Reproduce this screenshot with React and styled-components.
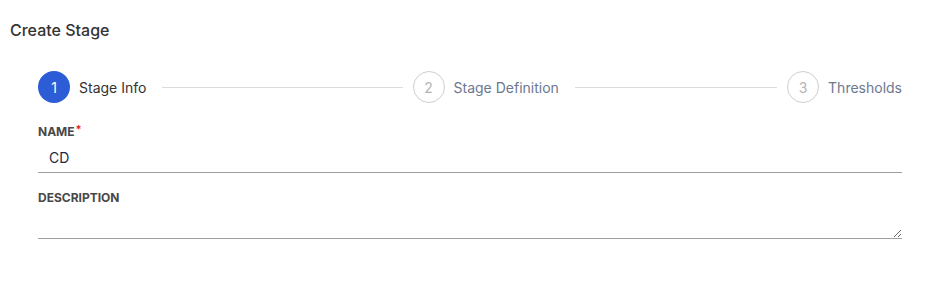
import styled, { createGlobalStyle } from "styled-components";

const GlobalStyle = createGlobalStyle`
  body {
    margin: 0;
    background: #fff;
    font-family: Inter, "Noto Sans", sans-serif;
  }
`;

const Page = styled.div`
  padding: 20px 34px 0 10px;
`;

const Title = styled.h1`
  margin: 0;
  font-size: 16px;
  line-height: 20px;
  font-weight: 500;
  color: #333;
`;

const Body = styled.div`
  padding-left: 28px;
`;

const Stepper = styled.div`
  display: flex;
  align-items: center;
  margin-top: 31px;
  height: 32px;
`;

const Step = styled.div`
  display: flex;
  align-items: center;
  flex: ${(p) => (p.last ? "0 0 auto" : "1 1 0")};
`;

const Circle = styled.span`
  box-sizing: border-box;
  width: 32px;
  height: 32px;
  flex-shrink: 0;
  border-radius: 50%;
  display: flex;
  align-items: center;
  justify-content: center;
  font-size: 14px;
  background: ${(p) => (p.active ? "#2c5cd6" : "#fff")};
  color: ${(p) => (p.active ? "#fff" : "#b4b4b4")};
  border: ${(p) => (p.active ? "none" : "1px solid #cfcfcf")};
`;

const StepLabel = styled.span`
  margin-left: 9px;
  font-size: 14px;
  white-space: nowrap;
  color: ${(p) => (p.active ? "#333" : "#6b7890")};
`;

const Line = styled.div`
  flex: 1;
  height: 1px;
  background: #dcdcdc;
  margin: 0 10px 0 16px;
`;

const Field = styled.div`
  display: flex;
  flex-direction: column;
  margin-top: ${(p) => p.mt}px;
`;

const Label = styled.label`
  font-size: 12px;
  line-height: 14px;
  font-weight: 700;
  color: #484848;
  sup {
    color: #e02424;
    font-size: 11px;
    vertical-align: top;
    line-height: 8px;
    margin-left: 1px;
  }
`;

const Input = styled.input`
  box-sizing: border-box;
  height: 34px;
  border: none;
  border-bottom: 1px solid #9e9e9e;
  padding: 4px 11px 0;
  font-family: Inter, "Noto Sans", sans-serif;
  font-size: 14px;
  color: #1e2a44;
  outline: none;
  background: transparent;
`;

const TextArea = styled.textarea`
  box-sizing: border-box;
  height: 34px;
  border: none;
  border-bottom: 1px solid #9e9e9e;
  padding: 6px 11px;
  font-family: Inter, "Noto Sans", sans-serif;
  font-size: 14px;
  resize: vertical;
  outline: none;
  background: transparent;
`;

const steps = [
  { n: 1, label: "Stage Info", active: true },
  { n: 2, label: "Stage Definition" },
  { n: 3, label: "Thresholds" },
];

export default function App() {
  return (
    <>
      <GlobalStyle />
      <Page>
        <Title>Create Stage</Title>
        <Body>
          <Stepper>
            {steps.map((s, idx) => {
              const last = idx === steps.length - 1;
              return (
                <Step key={s.n} last={last}>
                  <Circle active={s.active}>{s.n}</Circle>
                  <StepLabel active={s.active}>{s.label}</StepLabel>
                  {!last && <Line />}
                </Step>
              );
            })}
          </Stepper>
          <Field mt={22}>
            <Label>
              NAME<sup>*</sup>
            </Label>
            <Input defaultValue="CD" />
          </Field>
          <Field mt={18}>
            <Label>DESCRIPTION</Label>
            <TextArea />
          </Field>
        </Body>
      </Page>
    </>
  );
}
